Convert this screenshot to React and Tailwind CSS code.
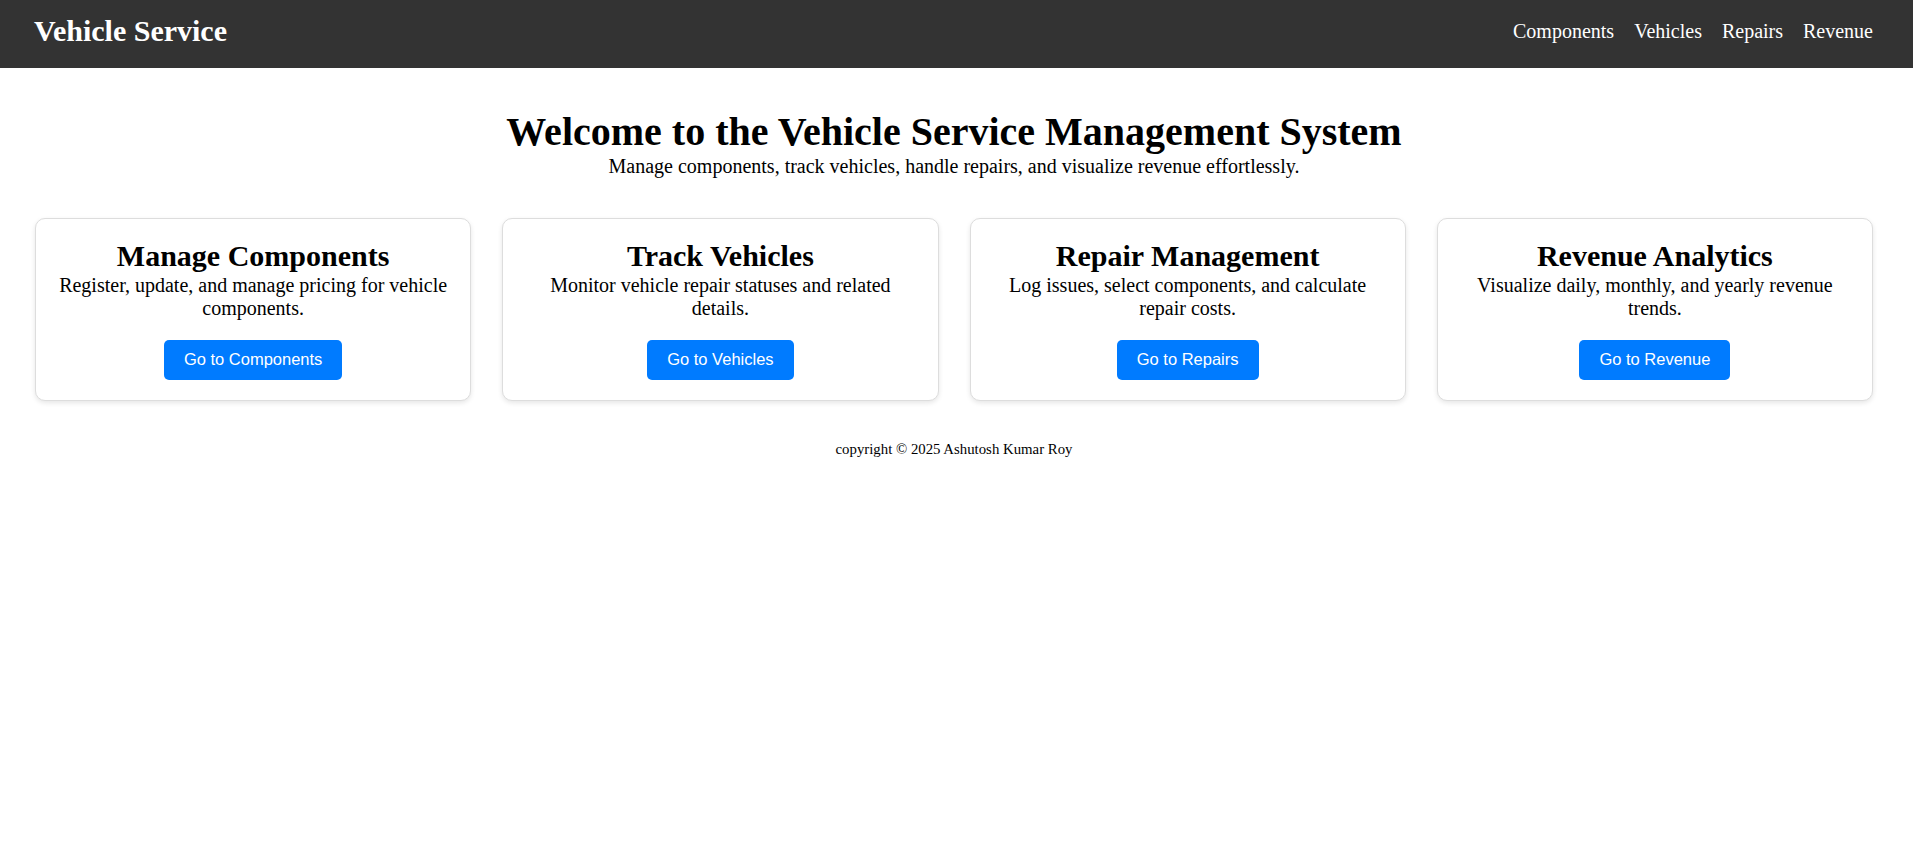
import React from "react";

const NAV_LINKS = ["Components", "Vehicles", "Repairs", "Revenue"];

const FEATURES = [
  {
    title: "Manage Components",
    text: "Register, update, and manage pricing for vehicle components.",
    action: "Go to Components",
  },
  {
    title: "Track Vehicles",
    text: "Monitor vehicle repair statuses and related details.",
    action: "Go to Vehicles",
  },
  {
    title: "Repair Management",
    text: "Log issues, select components, and calculate repair costs.",
    action: "Go to Repairs",
  },
  {
    title: "Revenue Analytics",
    text: "Visualize daily, monthly, and yearly revenue trends.",
    action: "Go to Revenue",
  },
];

export default function App() {
  return (
    <div className="min-h-screen bg-white text-black font-['Liberation_Serif','Times_New_Roman',serif]">
      {/* top bar */}
      <header className="flex h-[68px] items-center justify-between bg-[#333] pl-[34px] pr-[40px] pb-[6px] text-white">
        <h1 className="m-0 text-[30px] font-bold leading-[1.15]">Vehicle Service</h1>
        <nav className="flex gap-5 text-[20px] leading-[1.15]">
          {NAV_LINKS.map((label) => (
            <a key={label} href="#" className="text-white no-underline">
              {label}
            </a>
          ))}
        </nav>
      </header>

      <main className="pl-[35px] pr-[40px]">
        {/* hero */}
        <section className="pt-[41px] text-center">
          <h2 className="m-0 text-[40px] font-bold leading-[1.15]">
            Welcome to the Vehicle Service Management System
          </h2>
          <p className="m-0 text-[20px] leading-[1.15]">
            Manage components, track vehicles, handle repairs, and visualize revenue effortlessly.
          </p>
        </section>

        {/* feature cards */}
        <section className="mt-[40px] grid grid-cols-4 gap-[31px]">
          {FEATURES.map((f) => (
            <div
              key={f.title}
              className="flex flex-col items-center rounded-[10px] border border-[#ddd] bg-white p-5 text-center shadow-[0_2px_5px_rgba(0,0,0,0.1)]"
            >
              <h3 className="m-0 text-[30px] font-bold leading-[1.15]">{f.title}</h3>
              <p className="m-0 text-[20px] leading-[1.15]">{f.text}</p>
              <button className="mt-5 flex h-10 items-center rounded-[5px] bg-[#007bff] px-5 text-[16.5px] text-white font-['Liberation_Sans',Arial,sans-serif]">
                {f.action}
              </button>
            </div>
          ))}
        </section>

        <footer className="mt-[40px] text-center text-[14.8px] leading-[1.15]">
          copyright © 2025 Ashutosh Kumar Roy
        </footer>
      </main>
    </div>
  );
}
